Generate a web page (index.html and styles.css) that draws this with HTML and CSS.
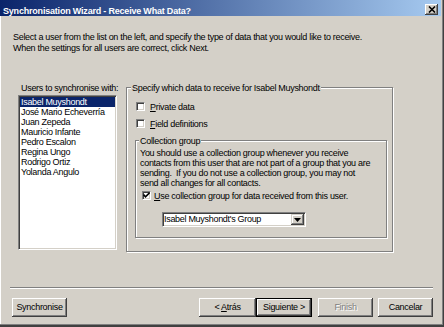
FILE: index.html
```html
<!DOCTYPE html>
<html>
<head>
<meta charset="utf-8">
<title>Synchronisation Wizard</title>
<link rel="stylesheet" href="styles.css">
</head>
<body>
<div class="window">
  <div class="titlebar">
    <span class="title">Synchronisation Wizard - Receive What Data?</span>
    <span class="close"><svg width="8" height="7" viewBox="0 0 8 7"><path d="M1 0.5 L7 6.5 M7 0.5 L1 6.5" stroke="#000" stroke-width="1.6" fill="none"/></svg></span>
  </div>
  <p class="intro">Select a user from the list on the left, and specify the type of data that you would like to receive.<br>When the settings for all users are correct, click Next.</p>
  <div class="main">
    <div class="users">
      <div class="users-label">Users to synchronise with:</div>
      <ul class="listbox">
        <li class="selected">Isabel Muyshondt</li>
        <li>José Mario Echeverría</li>
        <li>Juan Zepeda</li>
        <li>Mauricio Infante</li>
        <li>Pedro Escalon</li>
        <li>Regina Ungo</li>
        <li>Rodrigo Ortiz</li>
        <li>Yolanda Angulo</li>
      </ul>
    </div>
    <fieldset class="group outer">
      <legend>Specify which data to receive for Isabel Muyshondt</legend>
      <div class="check row1"><span class="box"></span><span class="check-label"><u>P</u>rivate data</span></div>
      <div class="check row2"><span class="box"></span><span class="check-label"><u>F</u>ield definitions</span></div>
      <fieldset class="group inner">
        <legend>Collection group</legend>
        <p class="note">You should use a collection group whenever you receive<br>contacts from this user that are not part of a group that you are<br>sending.&nbsp; If you do not use a collection group, you may not<br>send all changes for all contacts.</p>
        <div class="check row3"><span class="box"><svg width="7" height="7" viewBox="0 0 7 7"><path d="M0.5 2.5 L2.5 4.8 L6.5 0.8" stroke="#000" stroke-width="1.6" fill="none"/></svg></span><span class="check-label"><u>U</u>se collection group for data received from this user.</span></div>
        <div class="combo"><span class="combo-text">Isabel Muyshondt's Group</span><span class="combo-btn"><svg width="7" height="4" viewBox="0 0 7 4"><path d="M0 0 H7 L3.5 4 Z" fill="#000"/></svg></span></div>
      </fieldset>
    </fieldset>
  </div>
  <div class="separator"></div>
  <div class="buttons">
    <button class="btn sync">Synchronise</button>
    <div class="nav">
      <button class="btn back">&lt; <u>A</u>trás</button>
      <button class="btn next">Siguiente &gt;</button>
      <button class="btn finish" disabled>Finish</button>
      <button class="btn cancel">Cancelar</button>
    </div>
  </div>
</div>
</body>
</html>
```
FILE: styles.css
```css
* { box-sizing: border-box; }
html, body { margin: 0; padding: 0; }
body {
  font-family: "Liberation Sans", Arial, sans-serif;
  font-size: 9px;
  letter-spacing: -0.3px;
  line-height: 10px;
  color: #000;
  background: #d4d0c8;
}
.window {
  width: 444px;
  height: 327px;
  background: #d4d0c8;
  border-right: 1px solid #404040;
  border-bottom: 2px solid #404040;
  box-shadow: inset -1px -1px #808080, inset 1px 0 #fff;
  overflow: hidden;
}
.titlebar {
  display: flex;
  justify-content: space-between;
  align-items: flex-start;
  height: 16px;
  margin-right: 2px;
  padding: 0 3px 0 3px;
  background: linear-gradient(to right, #0a246a, #a6caf0);
}
.title {
  color: #fff;
  font-weight: bold;
  font-size: 9px;
  letter-spacing: -0.2px;
  line-height: 16px;
  padding-top: 3px;
  white-space: nowrap;
}
.close {
  width: 13px;
  height: 11px;
  margin-top: 4px;
  background: #d4d0c8;
  box-shadow: inset -1px -1px #404040, inset 1px 1px #fff, inset -2px -2px #808080;
  display: flex;
  align-items: center;
  justify-content: center;
}
.close svg { display: block; }
.intro {
  margin: 15.5px 0 0 13px;
  line-height: 11px;
  white-space: nowrap;
}
.main {
  display: flex;
  align-items: flex-start;
  margin: 29px 0 0 18px;
}
.users { width: 99px; }
.users-label { margin-left: 3px; white-space: nowrap; }
.listbox, .box, .combo {
  border: 1px solid;
  border-color: #808080 #fff #fff #808080;
  box-shadow: inset 1px 1px #404040, inset -1px -1px #d4d0c8;
}
.listbox {
  list-style: none;
  margin: 2px 0 0 0;
  padding: 1px;
  width: 99px;
  height: 155px;
  background: #fff;
}
.listbox li { padding-left: 1px; white-space: nowrap; height: 10px; }
.listbox li.selected { background: #0a246a; color: #fff; }
.group {
  margin: 0;
  padding: 0;
  min-width: 0;
  border: 1px solid #808080;
  box-shadow: 1px 1px 0 #fff, inset 1px 1px 0 #fff;
}
.group legend {
  padding: 0 1px;
  margin-left: 4px;
  line-height: 10px;
  background: #d4d0c8;
  white-space: nowrap;
}
.outer { margin-left: 9px; width: 267px; height: 169px; }
.inner { margin: 7px 0 0 8px; width: 252px; height: 102px; }
.inner legend { margin-left: 3px; }
.check { display: flex; align-items: flex-start; height: 10px; white-space: nowrap; }
.box {
  width: 9px;
  height: 9px;
  background: #fff;
  flex: none;
  display: flex;
  align-items: center;
  justify-content: center;
}
.box svg { display: block; }
.row1 { margin: 9px 0 0 9px; }
.row2 { margin: 7px 0 0 9px; }
.row1 .box, .row2 .box { margin-right: 5px; }
.row3 { margin: 3.3px 0 0 5.5px; }
.row3 .box { margin-right: 3.5px; }
.note { margin: 2.5px 0 0 4px; white-space: nowrap; }
.combo {
  display: flex;
  margin: 11px 0 0 26px;
  width: 144px;
  height: 15px;
  padding: 1px;
  background: #fff;
}
.combo-text { flex: 1; white-space: nowrap; line-height: 11px; }
.combo-btn {
  width: 13px;
  height: 11px;
  background: #d4d0c8;
  box-shadow: inset -1px -1px #404040, inset 1px 1px #d4d0c8, inset -2px -2px #808080, inset 2px 2px #fff;
  display: flex;
  align-items: center;
  justify-content: center;
}
.combo-btn svg { display: block; }
.separator {
  margin: 35px 10px 0 10px;
  border-top: 1px solid #808080;
  border-bottom: 1px solid #fff;
}
.buttons { display: flex; margin-top: 9px; }
.nav { display: flex; margin-left: auto; margin-right: 10px; }
.btn {
  font: inherit;
  letter-spacing: inherit;
  color: #000;
  height: 19px;
  line-height: 19px;
  padding: 0;
  border: none;
  background: #d4d0c8;
  box-shadow: inset -1px -1px #404040, inset 1px 1px #fff, inset -2px -2px #808080;
  text-align: center;
  white-space: nowrap;
}
.sync { margin-left: 12px; width: 55px; }
.back { width: 57px; }
.next {
  width: 56px;
  border: 1px solid #000;
  line-height: 17px;
}
.finish { margin-left: 6px; width: 55px; color: #808080; text-shadow: 1px 1px 0 #fff; }
.cancel { margin-left: 5px; width: 55px; }
```
